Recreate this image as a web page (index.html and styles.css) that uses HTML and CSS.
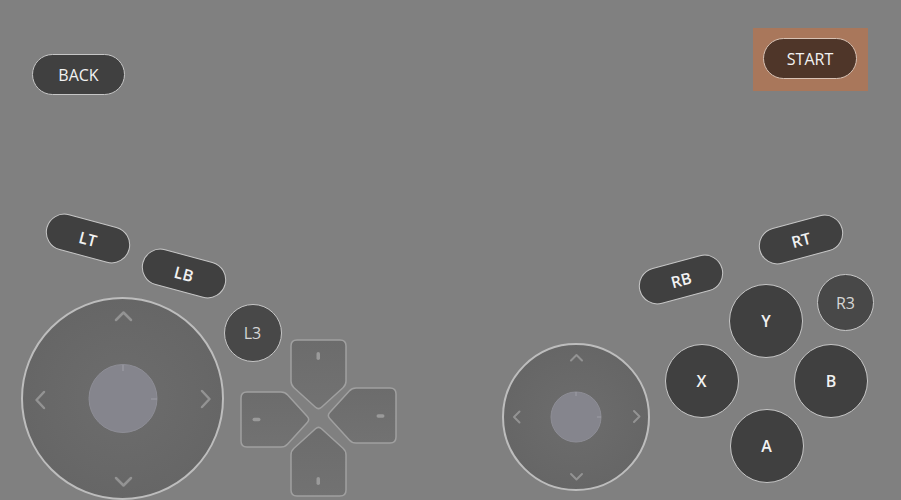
FILE: index.html
```html
<!DOCTYPE html>
<html lang="en">
<head>
<meta charset="utf-8">
<title>Gamepad overlay</title>
<link rel="stylesheet" href="styles.css">
</head>
<body>
<div class="pad">
  <div class="btn pill back">BACK</div>
  <div class="start-zone"><div class="btn pill start">START</div></div>

  <div class="btn bumper lt">LT</div>
  <div class="btn bumper lb">LB</div>
  <div class="btn bumper rb">RB</div>
  <div class="btn bumper rt">RT</div>

  <div class="btn round thumb l3">L3</div>
  <div class="btn round thumb r3">R3</div>

  <div class="btn round face fy">Y</div>
  <div class="btn round face fx">X</div>
  <div class="btn round face fb">B</div>
  <div class="btn round face fa">A</div>

  <svg class="stick stick-left" width="205" height="205" viewBox="0 0 205 205">
    <defs>
      <radialGradient id="baseL" cx="50%" cy="50%" r="50%">
        <stop offset="0" stop-color="#6d6d6d"/>
        <stop offset="1" stop-color="#666666"/>
      </radialGradient>
    </defs>
    <circle cx="102.5" cy="102.5" r="100.5" fill="url(#baseL)" stroke="#bdbdbd" stroke-width="2"/>
    <g class="chev">
      <path d="M96 24 L103.5 16.5 L111 24"/>
      <path d="M96 182 L103.5 189.5 L111 182"/>
      <path d="M24 96 L16.5 104 L24 112"/>
      <path d="M182 95 L189.5 103 L182 111"/>
    </g>
    <circle cx="103" cy="102.5" r="34" fill="#85858d" stroke="#8e8e96" stroke-width="1"/>
    <path d="M103 69 V75 M137 103 H131" stroke="#9d9da5" stroke-width="1.2"/>
  </svg>

  <svg class="stick stick-right" width="150" height="150" viewBox="0 0 150 150">
    <defs>
      <radialGradient id="baseR" cx="50%" cy="50%" r="50%">
        <stop offset="0" stop-color="#6d6d6d"/>
        <stop offset="1" stop-color="#666666"/>
      </radialGradient>
    </defs>
    <circle cx="75" cy="75" r="73" fill="url(#baseR)" stroke="#bdbdbd" stroke-width="2"/>
    <g class="chev chev-sm">
      <path d="M70 18.5 L75.5 13 L81 18.5"/>
      <path d="M70 132 L75.5 137.5 L81 132"/>
      <path d="M18.5 69.5 L13 75 L18.5 80.5"/>
      <path d="M133 69 L138.5 74.5 L133 80"/>
    </g>
    <circle cx="75" cy="75" r="25" fill="#85858d" stroke="#8e8e96" stroke-width="1"/>
    <path d="M75 50 V54 M100 75 H96" stroke="#9d9da5" stroke-width="1"/>
  </svg>

  <svg class="dpad" width="158" height="158" viewBox="0 0 158 158">
    <defs>
      <linearGradient id="dp" x1="0" y1="0" x2="0" y2="1">
        <stop offset="0" stop-color="#6c6c6c"/>
        <stop offset="1" stop-color="#727272"/>
      </linearGradient>
    </defs>
    <g class="dkey">
      <path d="M57 1 L100 1 Q106 1 106 7 L106 42 Q106 46 103 48.7 L81.5 68.3 Q78.5 71 75.5 68.3 L54 48.7 Q51 46 51 42 L51 7 Q51 1 57 1 Z"/>
      <path d="M81.5 89.7 L103 109.3 Q106 112 106 116 L106 151 Q106 157 100 157 L57 157 Q51 157 51 151 L51 116 Q51 112 54 109.3 L75.5 89.7 Q78.5 87 81.5 89.7 Z"/>
      <path d="M7 53 L41 53 Q45 53 47.7 56 L67.3 77.5 Q70 80.5 67.3 83.5 L47.7 105 Q45 108 41 108 L7 108 Q1 108 1 102 L1 59 Q1 53 7 53 Z"/>
      <path d="M89.7 73.5 L109.3 52 Q112 49 116 49 L150 49 Q156 49 156 55 L156 98 Q156 104 150 104 L116 104 Q112 104 109.3 101 L89.7 79.5 Q87 76.5 89.7 73.5 Z"/>
    </g>
    <g class="dmark">
      <rect x="76.5" y="13" width="3.5" height="8" rx="1.75"/>
      <rect x="76.5" y="138" width="3.5" height="8" rx="1.75"/>
      <rect x="12.5" y="78.75" width="8" height="3.5" rx="1.75"/>
      <rect x="136.5" y="75.25" width="8" height="3.5" rx="1.75"/>
    </g>
  </svg>
</div>
</body>
</html>
```

FILE: styles.css
```css
html, body {
  margin: 0;
  padding: 0;
  background: #808080;
}

.pad {
  position: relative;
  width: 901px;
  height: 500px;
  background: #808080;
  overflow: hidden;
  font-family: "Open Sans", "Noto Sans", "DejaVu Sans", sans-serif;
}

.btn {
  position: absolute;
  box-sizing: border-box;
  display: flex;
  align-items: center;
  justify-content: center;
  background: #404040;
  border: 1.5px solid #c6c6c6;
  color: #f2f2f2;
  font-size: 16px;
  line-height: 1;
}

.pill {
  height: 41px;
  border-radius: 21px;
}

.back {
  left: 32px;
  top: 54px;
  width: 93px;
}

.start-zone {
  position: absolute;
  left: 753px;
  top: 28px;
  width: 115px;
  height: 63px;
  box-sizing: border-box;
  padding: 0 1px 2px 0;
  background: #a9775b;
  display: flex;
  align-items: center;
  justify-content: center;
}

.start {
  position: static;
  width: 94px;
  background: #4f3629;
  border-color: #d8c2b4;
}

.bumper {
  width: 86px;
  height: 37px;
  border-radius: 19px;
  font-weight: 600;
}

.lt { left: 45px;    top: 220px; transform: rotate(15deg); }
.lb { left: 141px;   top: 255px; transform: rotate(15deg); }
.rb { left: 637.5px; top: 261px; transform: rotate(-15deg); }
.rt { left: 758px;   top: 221px; transform: rotate(-15deg); }

.round {
  border-radius: 50%;
}

.thumb {
  width: 58px;
  height: 58px;
  background: #484848;
  color: #d6d6d6;
}

.l3 { left: 223.5px; top: 304px; }
.r3 { left: 817px;   top: 274px; width: 57px; height: 57px; }

.face {
  width: 74px;
  height: 74px;
  font-weight: 600;
}

.fy { left: 729px;   top: 283.5px; }
.fx { left: 664.5px; top: 344px; }
.fb { left: 794px;   top: 344px; }
.fa { left: 729.5px; top: 409px; }

.stick {
  position: absolute;
  display: block;
}

.stick-left  { left: 20px;  top: 296px; }
.stick-right { left: 501px; top: 342px; }

.chev path {
  fill: none;
  stroke: #939393;
  stroke-width: 2.5;
  stroke-linecap: round;
  stroke-linejoin: round;
}

.chev-sm path {
  stroke-width: 2;
}

.dpad {
  position: absolute;
  display: block;
  left: 240px;
  top: 339px;
}

.dkey path {
  fill: url(#dp);
  stroke: #a0a0a0;
  stroke-width: 1.5;
}

.dmark rect {
  fill: #9a9a9a;
}
```
